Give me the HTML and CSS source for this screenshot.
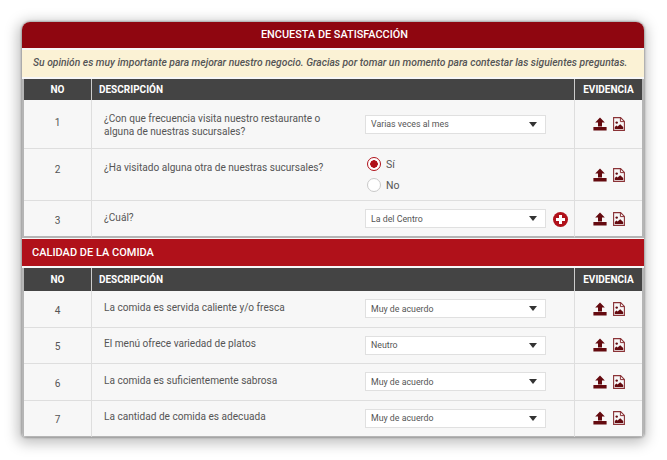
FILE: index.html
```html
<!DOCTYPE html>
<html lang="es">
<head>
  <meta charset="UTF-8">
  <meta name="viewport" content="width=device-width, initial-scale=1">
  <title>Encuesta de satisfacción</title>
  <link rel="stylesheet" href="styles.css">
</head>
<body>

  <svg class="defs" width="0" height="0" aria-hidden="true">
    <symbol id="ico-upload" viewBox="0 0 14 14">
      <path d="M7 .4 11.8 5.4H9V9.4H5V5.4H2.2Z"/>
      <path d="M.4 10H13.6V13.4H.4Z"/>
    </symbol>
    <symbol id="ico-file" viewBox="0 0 12 14">
      <path fill="none" stroke="#8a3236" stroke-width="1.1" d="M.6.6H7.6L11.4 4.4V13.4H.6Z"/>
      <path fill="none" stroke="#8a3236" stroke-width="1" d="M7.4.9V4.6H11.1"/>
      <circle cx="3.7" cy="5.6" r="1.2"/>
      <path d="M1.8 12V10L3.4 8.4 4.6 9.6 7.2 7.2 10.2 10V12Z"/>
    </symbol>
  </svg>

  <div class="card">
    <div class="card-title">ENCUESTA DE SATISFACCIÓN</div>
    <div class="notice">Su opinión es muy importante para mejorar nuestro negocio. Gracias por tomar un momento para contestar las siguientes preguntas.</div>

    <table class="survey">
      <colgroup><col class="c-no"><col class="c-q"><col class="c-a"><col class="c-ev"></colgroup>
      <tr class="head">
        <th>NO</th>
        <th colspan="2" class="left">DESCRIPCIÓN</th>
        <th>EVIDENCIA</th>
      </tr>
      <tr class="r1">
        <td class="num">1</td>
        <td class="q">¿Con que frecuencia visita nuestro restaurante o alguna de nuestras sucursales?</td>
        <td class="a"><div class="select"><select><option>Varias veces al mes</option></select></div></td>
        <td class="ev"><svg class="ico"><use href="#ico-upload"/></svg><svg class="ico-f"><use href="#ico-file"/></svg></td>
      </tr>
      <tr class="r2">
        <td class="num">2</td>
        <td class="q">¿Ha visitado alguna otra de nuestras sucursales?</td>
        <td class="a">
          <label class="radio"><input type="radio" name="otra" checked> Sí</label>
          <label class="radio"><input type="radio" name="otra"> No</label>
        </td>
        <td class="ev"><svg class="ico"><use href="#ico-upload"/></svg><svg class="ico-f"><use href="#ico-file"/></svg></td>
      </tr>
      <tr class="r3">
        <td class="num">3</td>
        <td class="q">¿Cuál?</td>
        <td class="a">
          <div class="with-add">
            <div class="select"><select><option>La del Centro</option></select></div>
            <span class="add"></span>
          </div>
        </td>
        <td class="ev"><svg class="ico"><use href="#ico-upload"/></svg><svg class="ico-f"><use href="#ico-file"/></svg></td>
      </tr>
    </table>

    <div class="section">CALIDAD DE LA COMIDA</div>

    <table class="survey">
      <colgroup><col class="c-no"><col class="c-q"><col class="c-a"><col class="c-ev"></colgroup>
      <tr class="head head2">
        <th>NO</th>
        <th colspan="2" class="left">DESCRIPCIÓN</th>
        <th>EVIDENCIA</th>
      </tr>
      <tr class="rn">
        <td class="num">4</td>
        <td class="q">La comida es servida caliente y/o fresca</td>
        <td class="a"><div class="select"><select><option>Muy de acuerdo</option></select></div></td>
        <td class="ev"><svg class="ico"><use href="#ico-upload"/></svg><svg class="ico-f"><use href="#ico-file"/></svg></td>
      </tr>
      <tr class="rn">
        <td class="num">5</td>
        <td class="q">El menú ofrece variedad de platos</td>
        <td class="a"><div class="select"><select><option>Neutro</option></select></div></td>
        <td class="ev"><svg class="ico"><use href="#ico-upload"/></svg><svg class="ico-f"><use href="#ico-file"/></svg></td>
      </tr>
      <tr class="rn">
        <td class="num">6</td>
        <td class="q">La comida es suficientemente sabrosa</td>
        <td class="a"><div class="select"><select><option>Muy de acuerdo</option></select></div></td>
        <td class="ev"><svg class="ico"><use href="#ico-upload"/></svg><svg class="ico-f"><use href="#ico-file"/></svg></td>
      </tr>
      <tr class="rn last">
        <td class="num">7</td>
        <td class="q">La cantidad de comida es adecuada</td>
        <td class="a"><div class="select"><select><option>Muy de acuerdo</option></select></div></td>
        <td class="ev"><svg class="ico"><use href="#ico-upload"/></svg><svg class="ico-f"><use href="#ico-file"/></svg></td>
      </tr>
    </table>
  </div>

</body>
</html>
```

FILE: styles.css
```css
html, body {
  height: 100%;
  overflow: hidden;
}
body {
  margin: 0;
  padding: 22px 23px 0 22px;
  box-sizing: border-box;
  background: #fff;
  font-family: Roboto, "Liberation Sans", sans-serif;
  color: #555;
}
.defs {
  position: absolute;
}

.card {
  width: 622px;
  height: 415px;
  background: #f7f7f7;
  border-radius: 8px 8px 4px 4px;
  box-shadow: 0 0 2px 1px rgba(0, 0, 0, 0.25), -1px 3px 14px 3px rgba(0, 0, 0, 0.26);
  overflow: hidden;
}
.card-title {
  height: 26px;
  line-height: 26px;
  padding-left: 3px;
  background: #8f0610;
  color: #fff;
  font-size: 10.9px;
  font-weight: 500;
  text-align: center;
}
.notice {
  height: 27px;
  line-height: 26px;
  margin-top: 2px;
  background: #fbf2d5;
  padding-left: 11px;
  font-size: 10.3px;
  font-weight: 500;
  font-style: italic;
  color: #555;
  white-space: nowrap;
}
.section {
  height: 27px;
  line-height: 27px;
  margin-top: 1px;
  padding-left: 10px;
  background: #b0111a;
  color: #fff;
  font-size: 11px;
  font-weight: 500;
}

.survey {
  width: 622px;
  table-layout: fixed;
  border-collapse: separate;
  border-spacing: 0;
  margin-top: 2px;
  border-left: 2px solid #b5b5b5;
  border-right: 2px solid #b5b5b5;
  box-sizing: border-box;
}
.c-no { width: 67px; }
.c-q { width: 274px; }
.c-a { width: 209px; }

.head th {
  box-sizing: border-box;
  height: 21px;
  padding: 0;
  background: #444;
  color: #fff;
  font-size: 10px;
  font-weight: 700;
  border-left: 1px solid #ccc;
}
.head th:first-child {
  border-left: 0;
}
.head th.left {
  text-align: left;
  padding-left: 7px;
}
.head2 th {
  height: 23px;
}

td {
  box-sizing: border-box;
  padding: 0;
  border-bottom: 1px solid #dedede;
  font-size: 10.1px;
  line-height: 13px;
  color: #555;
}
.r1 td { height: 49px; }
.r2 td { height: 52px; }
.r3 td { height: 37px; border-bottom: 2px solid #b5b5b5; }
.rn td { height: 36.5px; }
.rn.last td { height: 37px; border-bottom: 2px solid #b5b5b5; }

.num {
  text-align: center;
  padding-top: 3px;
}
.r1 .num {
  padding-top: 0;
  padding-bottom: 4px;
}
.r2 .num {
  padding-top: 0;
  padding-bottom: 10px;
}
.q {
  border-left: 1px solid #dedede;
  padding-left: 12px;
  padding-right: 30px;
  padding-bottom: 3px;
}
.r1 .q {
  padding-top: 1px;
  padding-bottom: 0;
}
.r2 .q {
  padding-bottom: 14px;
}
.ev {
  text-align: center;
  border-left: 1px solid #dedede;
  white-space: nowrap;
}
.ico, .ico-f {
  fill: #640a0f;
  vertical-align: middle;
  height: 14px;
}
.ico {
  width: 14px;
  margin-right: 6px;
}
.ico-f {
  width: 12px;
}

.select {
  position: relative;
  width: 181px;
  height: 19px;
}
.select select {
  appearance: none;
  display: block;
  width: 100%;
  height: 100%;
  margin: 0;
  padding: 0 0 0 5px;
  background: #fff;
  border: 1px solid #e0e0e0;
  border-radius: 0;
  font-family: inherit;
  font-size: 8.8px;
  color: #555;
}
.select::after {
  content: "";
  position: absolute;
  right: 9px;
  top: 7px;
  border-left: 4px solid transparent;
  border-right: 4px solid transparent;
  border-top: 5px solid #333;
}
.with-add {
  display: flex;
  align-items: center;
  gap: 7px;
}
.add {
  position: relative;
  flex: none;
  width: 15px;
  height: 15px;
  margin-top: 2px;
  border-radius: 50%;
  background: #b0111a;
}
.add::before, .add::after {
  content: "";
  position: absolute;
  background: #fff;
}
.add::before {
  left: 3px;
  top: 6px;
  width: 9px;
  height: 3px;
}
.add::after {
  left: 6px;
  top: 3px;
  width: 3px;
  height: 9px;
}

.radio {
  display: flex;
  align-items: center;
  gap: 5px;
  height: 21px;
  margin-left: 2px;
  font-size: 10.5px;
}
.radio input {
  appearance: none;
  width: 14px;
  height: 14px;
  margin: 0;
  background: #fff;
  border: 1px solid #c9c9c9;
  border-radius: 50%;
}
.radio input:checked {
  border: 1.5px solid #b0111a;
  background: radial-gradient(circle, #b0111a 0 3.5px, #fff 4px);
}
```
